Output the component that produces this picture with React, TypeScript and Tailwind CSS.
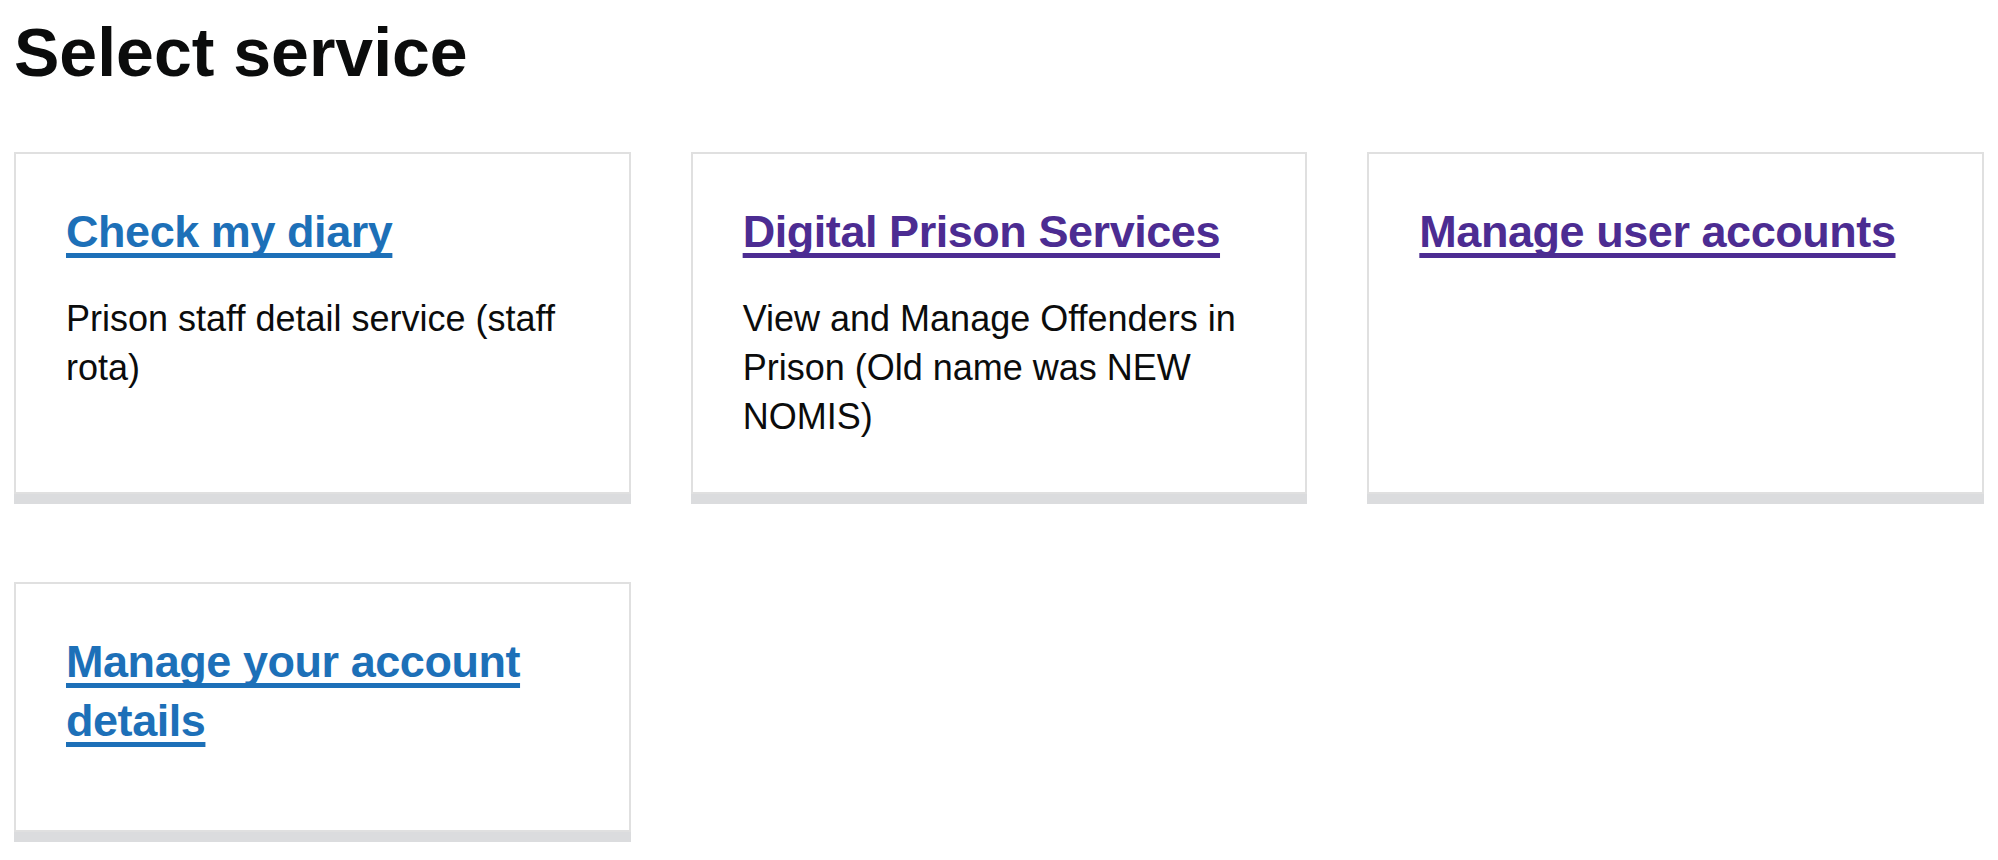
import React from 'react';

type Service = {
  name: string;
  description?: string;
  visited?: boolean;
};

const services: Service[] = [
  { name: 'Check my diary', description: 'Prison staff detail service (staff rota)' },
  {
    name: 'Digital Prison Services',
    description: 'View and Manage Offenders in Prison (Old name was NEW NOMIS)',
    visited: true,
  },
  { name: 'Manage user accounts', visited: true },
  { name: 'Manage your account details' },
];

const ServiceCard: React.FC<{ service: Service }> = ({ service }) => (
  <div className="border-2 border-[#e0e0e0] bg-white px-[50px] pt-[48px] pb-[51px] shadow-[0_10px_0_#dbdcde]">
    <h2
      className={`text-[45px] font-bold leading-[59px] tracking-[-0.01em] ${
        service.description ? 'mb-[33px]' : 'mb-[29px]'
      }`}
    >
      <a
        href="#"
        className={`underline decoration-[5px] underline-offset-[6px] [text-decoration-skip-ink:none] ${
          service.visited ? 'text-[#4c2c92]' : 'text-[#1d70b8]'
        }`}
      >
        {service.name}
      </a>
    </h2>
    {service.description && (
      <p className="text-[36px] leading-[49px] text-[#0b0c0c]">{service.description}</p>
    )}
  </div>
);

export default function App() {
  return (
    <div className="min-h-screen bg-white px-[14px] pt-[18px] font-['Liberation_Sans',Arial,sans-serif] text-[#0b0c0c]">
      <h1 className="mb-[66px] text-[68px] font-bold leading-[68px]">Select service</h1>
      <div className="grid grid-cols-3 gap-x-[60px] gap-y-[88px]">
        {services.map((s) => (
          <ServiceCard key={s.name} service={s} />
        ))}
      </div>
    </div>
  );
}
